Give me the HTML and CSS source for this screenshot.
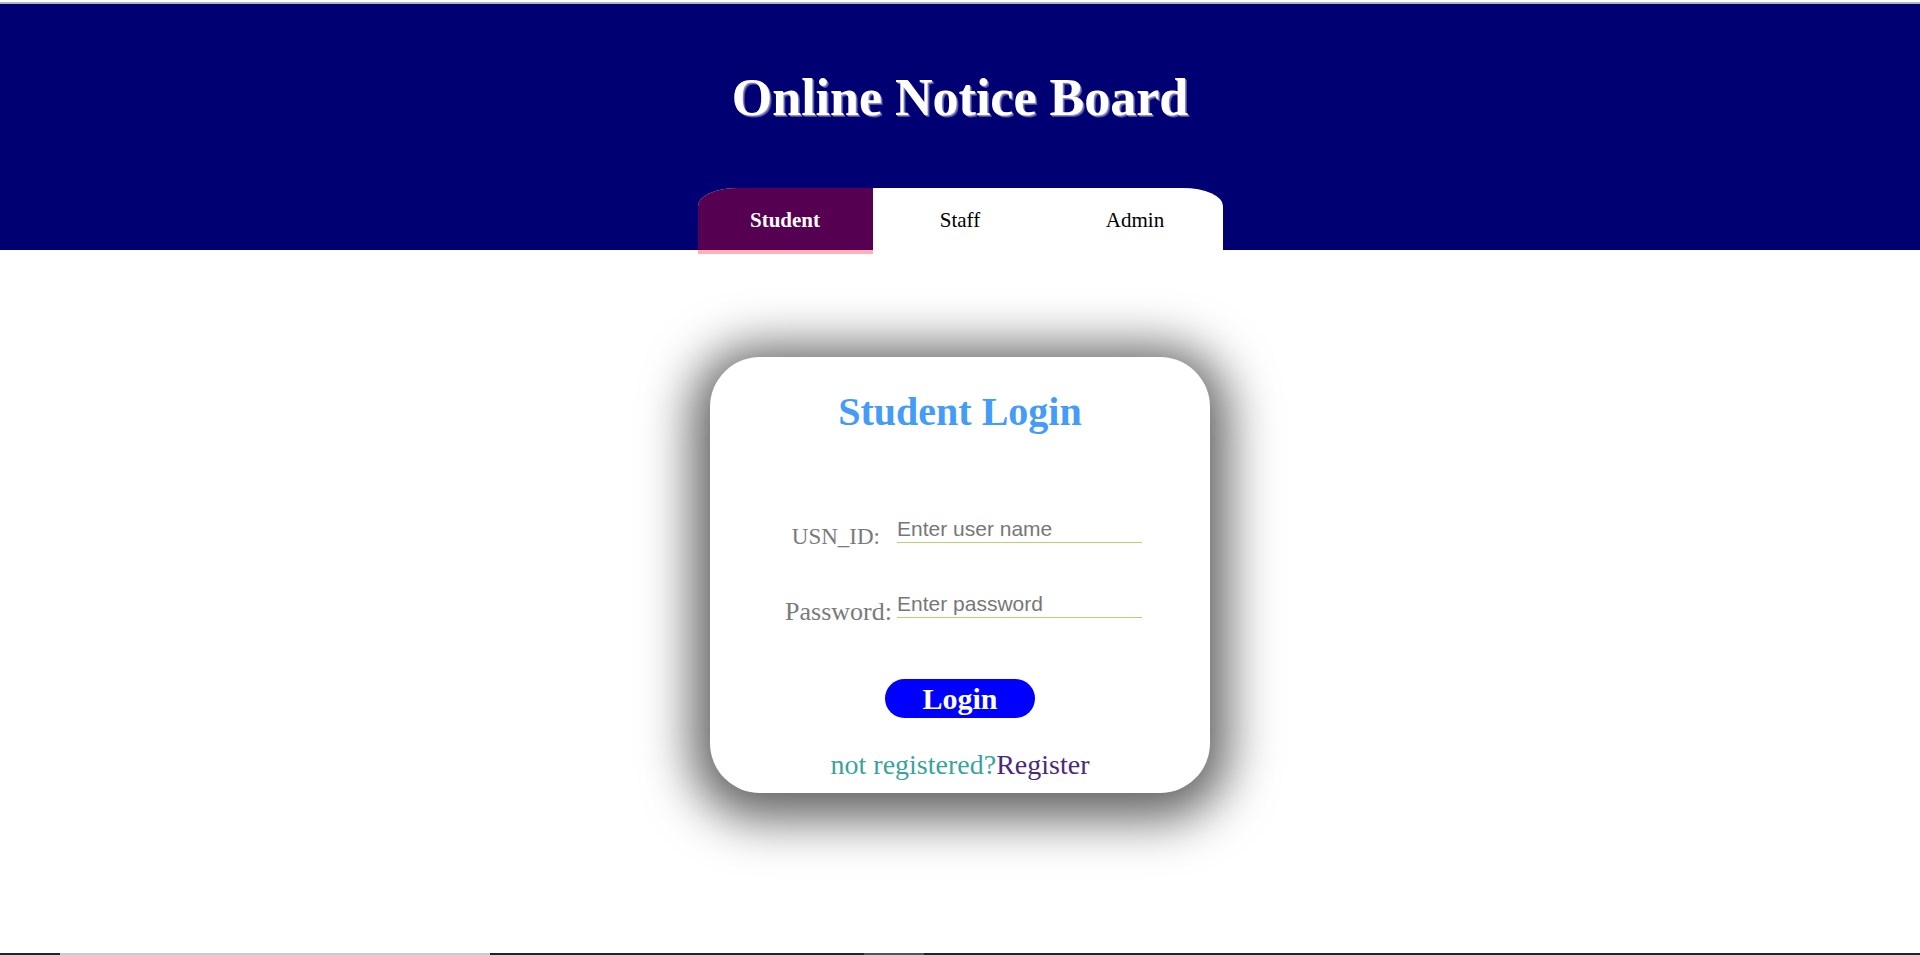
FILE: index.html
```html
<!DOCTYPE html>
<html lang="en">
<head>
<meta charset="utf-8">
<title>Online Notice Board</title>
<link rel="stylesheet" href="styles.css">
</head>
<body>
<div class="page">
  <div class="topline"></div>
  <header class="header">
    <h1 class="title">Online Notice Board</h1>
    <nav class="tabs">
      <a class="tab active">Student</a>
      <a class="tab">Staff</a>
      <a class="tab">Admin</a>
    </nav>
  </header>
  <main class="main">
    <form class="card">
      <h2 class="card-title">Student Login</h2>
      <div class="row row-usn">
        <label class="label">USN_ID:</label>
        <input class="field" type="text" placeholder="Enter user name">
      </div>
      <div class="row row-pass">
        <label class="label">Password:</label>
        <input class="field" type="password" placeholder="Enter password">
      </div>
      <button class="btn" type="button">Login</button>
      <p class="register"><span class="muted">not registered?</span><a class="reg-link">Register</a></p>
    </form>
  </main>
  <div class="bottombar">
    <span class="seg seg-light"></span>
    <span class="seg seg-mid"></span>
  </div>
</div>
</body>
</html>
```

FILE: styles.css
```css
html, body {
  margin: 0;
  padding: 0;
  background: #ffffff;
}
.page {
  min-height: 955px;
  display: flex;
  flex-direction: column;
}
.topline {
  height: 2px;
  border-bottom: 2px solid #b4b4bc;
  background: #ffffff;
  flex-shrink: 0;
}
.header {
  background: #000073;
  height: 246px;
  flex-shrink: 0;
  padding-top: 66px;
  box-sizing: border-box;
  display: flex;
  flex-direction: column;
  align-items: center;
}
.title {
  margin: 0;
  font-family: "Liberation Serif", "Times New Roman", serif;
  font-weight: bold;
  font-size: 52px;
  line-height: 56px;
  color: #ffffff;
  text-shadow: 1px 1px 0 #8c8cc8, 2px 2px 0 #4d4da0;
}
.tabs {
  margin-top: 62px;
  width: 525px;
  height: 66px;
  flex-shrink: 0;
  display: flex;
  background: #ffffff;
  border-radius: 40px 40px 0 0 / 18px 18px 0 0;
  overflow: hidden;
  position: relative;
  z-index: 1;
}
.tab {
  flex: 1;
  box-sizing: border-box;
  height: 66px;
  border-bottom: 4px solid #ffffff;
  display: flex;
  align-items: center;
  justify-content: center;
  padding-top: 3px;
  font-family: "Liberation Serif", "Times New Roman", serif;
  font-size: 21px;
  color: #000000;
}
.tab.active {
  background: #550050;
  color: #ffffff;
  font-weight: bold;
  border-bottom-color: #ffb0b4;
}
.main {
  display: flex;
  justify-content: center;
  padding-top: 107px;
}
.card {
  width: 500px;
  height: 436px;
  box-sizing: border-box;
  background: #ffffff;
  border-radius: 50px;
  box-shadow: 0 8px 50px 18px rgba(0, 0, 0, 0.62);
  padding-top: 31px;
  display: flex;
  flex-direction: column;
  align-items: center;
}
.card-title {
  margin: 0;
  font-family: "Liberation Serif", Cambria, serif;
  font-weight: bold;
  font-size: 40px;
  line-height: 48px;
  color: #449cf8;
}
.row {
  align-self: stretch;
  display: flex;
  align-items: flex-end;
  justify-content: flex-end;
  padding-right: 68px;
  height: 25px;
}
.row-usn {
  margin-top: 82px;
  gap: 17px;
}
.row-pass {
  margin-top: 50px;
  gap: 5px;
}
.label {
  font-family: "Liberation Serif", Cambria, serif;
  font-size: 26px;
  line-height: 25px;
  color: #7a7a7a;
  margin-bottom: -6px;
}
.row-usn .label {
  font-size: 23px;
}
.field {
  width: 245px;
  height: 25px;
  box-sizing: border-box;
  border: none;
  border-bottom: 1px solid #b6d270;
  padding: 0 0 3px;
  margin: 0;
  outline: none;
  background: transparent;
  font-family: "Liberation Sans", Arial, sans-serif;
  font-size: 21px;
  line-height: 21px;
  color: #333333;
}
.field::placeholder {
  color: #777777;
  opacity: 1;
}
.btn {
  margin-top: 61px;
  width: 150px;
  height: 39px;
  border: none;
  border-radius: 20px;
  background: #0000ff;
  color: #ffffff;
  font-family: "Liberation Serif", "Times New Roman", serif;
  font-weight: bold;
  font-size: 30px;
  line-height: 39px;
  padding: 0;
}
.register {
  margin: 33px 0 0;
  font-family: "Liberation Serif", Cambria, serif;
  font-size: 28px;
  line-height: 28px;
}
.muted {
  color: #3aa39a;
}
.reg-link {
  color: #4a2a78;
}
.bottombar {
  margin-top: auto;
  height: 2px;
  background: #222222;
  display: flex;
}
.seg {
  display: block;
  height: 2px;
}
.seg-light {
  margin-left: 60px;
  width: 430px;
  background: #cccccc;
}
.seg-mid {
  margin-left: 374px;
  width: 60px;
  background: #555555;
}
```
